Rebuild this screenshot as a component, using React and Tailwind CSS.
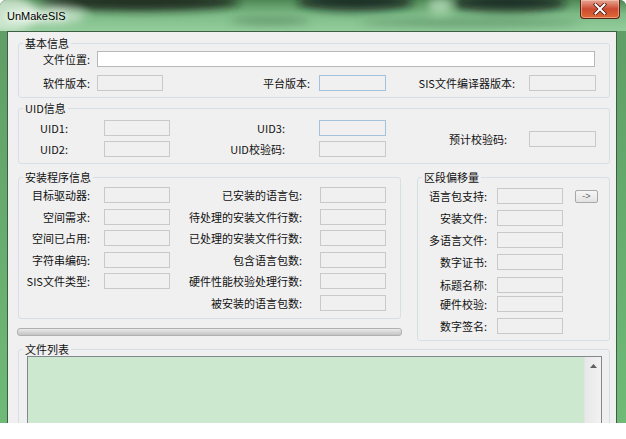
import React from 'react'

// Win7 style dialog: UnMakeSIS

const FIELD = {
  off: 'bg-[#f0f0f0] border border-[#c9c9c9]',
  blue: 'bg-[#f0f0f0] border border-[#a3c0dc]',
  white: 'bg-white border border-[#b8b8b8]',
}

function Lbl({ w, children }) {
  return (
    <span className={`shrink-0 whitespace-nowrap text-right leading-[14px] ${w}`}>{children}</span>
  )
}

function Field({ className = '', kind = 'off' }) {
  return <div className={`h-[16px] shrink-0 ${FIELD[kind]} ${className}`} />
}

function Group({ title, className = '', children }) {
  return (
    <fieldset className={`rounded-[3px] border border-[#d5dfe5] ${className}`}>
      <legend className="ml-[4px] px-[2px] leading-[14px]">{title}</legend>
      {children}
    </fieldset>
  )
}

function Row({ className = '', children }) {
  return <div className={`flex h-[16px] items-center ${className}`}>{children}</div>
}

function TitleBar() {
  return (
    <div className="relative flex h-[31px] shrink-0">
      <svg className="absolute inset-0" width="626" height="31" viewBox="0 0 626 31">
        <defs>
          <linearGradient id="tb" x1="0" y1="0" x2="0" y2="1">
            <stop offset="0" stopColor="#4f8856" />
            <stop offset="0.45" stopColor="#7dbb87" />
            <stop offset="1" stopColor="#94cd9c" />
          </linearGradient>
          <filter id="bl" x="-30%" y="-300%" width="160%" height="700%">
            <feGaussianBlur stdDeviation="4" />
          </filter>
        </defs>
        <rect width="626" height="31" fill="url(#tb)" />
        <g filter="url(#bl)">
          <ellipse cx="8" cy="14" rx="30" ry="18" fill="#dcefdc" opacity="0.8" />
          <ellipse cx="140" cy="2" rx="100" ry="9" fill="#141d15" opacity="0.85" />
          <ellipse cx="355" cy="2" rx="58" ry="9" fill="#141d15" opacity="0.8" />
          <ellipse cx="508" cy="3" rx="58" ry="9" fill="#141d15" opacity="0.8" />
          <ellipse cx="270" cy="21" rx="40" ry="4" fill="#3e6c45" opacity="0.45" />
          <ellipse cx="470" cy="23" rx="110" ry="4" fill="#42704a" opacity="0.45" />
          <ellipse cx="440" cy="6" rx="12" ry="8" fill="#bfe3c2" opacity="0.7" />
          <ellipse cx="45" cy="16" rx="40" ry="8" fill="#e8f5e8" opacity="0.6" />
        </g>
      </svg>
      <span className="relative self-center pl-[7px] pt-[1px] font-['Liberation_Sans',sans-serif] text-[11px] text-black [text-shadow:0_0_6px_#ffffff,0_0_10px_#ffffff]">
        UnMakeSIS
      </span>
      <button className="relative ml-auto mr-[6px] flex h-[19px] w-[40px] items-center justify-center self-start rounded-b-[4px] border border-t-0 border-[#5a2218] bg-gradient-to-b from-[#e6a595] via-[#cc4a30] to-[#de6a34] shadow-[inset_0_0_0_1px_rgba(255,220,200,0.45)]">
        <svg width="14" height="12" viewBox="0 0 14 12">
          <path d="M2.5 1.5 L11.5 10.5 M11.5 1.5 L2.5 10.5" stroke="#4a1810" strokeWidth="3.6" strokeLinecap="square" />
          <path d="M2.5 1.5 L11.5 10.5 M11.5 1.5 L2.5 10.5" stroke="#ffffff" strokeWidth="2" strokeLinecap="square" />
        </svg>
      </button>
    </div>
  )
}

export default function App() {
  return (
    <div className="h-[439px] w-[626px] bg-white font-['Noto_Sans_CJK_SC',sans-serif] text-[11px] text-[#111]">
      <div className="flex h-[423px] w-[626px] flex-col overflow-hidden rounded-t-[6px] bg-gradient-to-b from-[#5e9c65] to-[#6fba77]">
        <TitleBar />
        <div className="ml-[7px] mr-[9px] flex-1 border-x border-t border-[#3d5e43] bg-[#f0f0f0] pl-[10px] pr-[6px] pt-[4px]">
          {/* 基本信息 */}
          <Group title="基本信息">
            <div className="pt-[1px] pb-[6px]">
              <Row>
                <Lbl w="w-[71px]">文件位置:</Lbl>
                <Field kind="white" className="ml-[7px] w-[498px]" />
              </Row>
              <Row className="mt-[8px]">
                <Lbl w="w-[71px]">软件版本:</Lbl>
                <Field className="ml-[7px] w-[66px]" />
                <Lbl w="w-[147px]">平台版本:</Lbl>
                <Field kind="blue" className="ml-[9px] w-[67px]" />
                <Lbl w="w-[129px]">SIS文件编译器版本:</Lbl>
                <Field className="ml-[14px] w-[67px]" />
              </Row>
            </div>
          </Group>

          {/* UID信息 */}
          <Group title="UID信息" className="mt-[3px]">
            <div className="flex pt-[5px] pb-[6px]">
              <div className="flex flex-col gap-[5px]">
                <Row>
                  <Lbl w="w-[49px]">UID1:</Lbl>
                  <Field className="ml-[36px] w-[66px]" />
                  <Lbl w="w-[115px]">UID3:</Lbl>
                  <Field kind="blue" className="ml-[34px] w-[67px]" />
                </Row>
                <Row>
                  <Lbl w="w-[49px]">UID2:</Lbl>
                  <Field className="ml-[36px] w-[66px]" />
                  <Lbl w="w-[115px]">UID校验码:</Lbl>
                  <Field className="ml-[34px] w-[67px]" />
                </Row>
              </div>
              <div className="flex items-center">
                <Lbl w="w-[121px]">预计校验码:</Lbl>
                <Field className="ml-[22px] w-[67px]" />
              </div>
            </div>
          </Group>

          <div className="mt-[6px] flex items-start">
            {/* 安装程序信息 */}
            <div className="w-[383px] shrink-0">
              <Group title="安装程序信息">
                <div className="flex flex-col gap-[5.5px] pt-[3px] pb-[7px]">
                  {[
                    ['目标驱动器:', '已安装的语言包:'],
                    ['空间需求:', '待处理的安装文件行数:'],
                    ['空间已占用:', '已处理的安装文件行数:'],
                    ['字符串编码:', '包含语言包数:'],
                    ['SIS文件类型:', '硬件性能校验处理行数:'],
                    [null, '被安装的语言包数:'],
                  ].map(([a, b], i) => (
                    <Row key={i}>
                      {a ? (
                        <>
                          <Lbl w="w-[71px]">{a}</Lbl>
                          <Field className="ml-[14px] w-[66px]" />
                        </>
                      ) : (
                        <div className="w-[151px] shrink-0" />
                      )}
                      <Lbl w="w-[132px]">{b}</Lbl>
                      <Field className="ml-[18px] w-[66px]" />
                    </Row>
                  ))}
                </div>
              </Group>
              <div className="-ml-[1px] mt-[9px] h-[8px] w-[385px] rounded-[3px] border border-[#b0b0b0] bg-gradient-to-b from-[#ececec] via-[#d6d6d6] to-[#c4c4c4]" />
            </div>

            {/* 区段偏移量 */}
            <Group title="区段偏移量" className="ml-[16px] w-[193px] shrink-0">
              <div className="pt-[4px] pb-[6px]">
                <Row>
                  <Lbl w="w-[69px]">语言包支持:</Lbl>
                  <Field className="ml-[10px] w-[66px]" />
                  <button className="ml-[12px] flex h-[13px] w-[23px] items-center justify-center rounded-[2px] border border-[#a8a8a8] bg-gradient-to-b from-[#f6f6f6] to-[#e2e2e2] font-['Liberation_Sans',sans-serif] text-[9px] leading-none text-[#666]">
                    -&gt;
                  </button>
                </Row>
                <Row className="mt-[6px]">
                  <Lbl w="w-[69px]">安装文件:</Lbl>
                  <Field className="ml-[10px] w-[66px]" />
                </Row>
                <Row className="mt-[6px]">
                  <Lbl w="w-[69px]">多语言文件:</Lbl>
                  <Field className="ml-[10px] w-[66px]" />
                </Row>
                <Row className="mt-[6px]">
                  <Lbl w="w-[69px]">数字证书:</Lbl>
                  <Field className="ml-[10px] w-[66px]" />
                </Row>
                <Row className="mt-[7px]">
                  <Lbl w="w-[69px]">标题名称:</Lbl>
                  <Field className="ml-[10px] w-[66px]" />
                </Row>
                <Row className="mt-[3px]">
                  <Lbl w="w-[69px]">硬件校验:</Lbl>
                  <Field className="ml-[10px] w-[66px]" />
                </Row>
                <Row className="mt-[6px]">
                  <Lbl w="w-[69px]">数字签名:</Lbl>
                  <Field className="ml-[10px] w-[66px]" />
                </Row>
              </div>
            </Group>
          </div>

          {/* 文件列表 */}
          <Group title="文件列表" className="mt-[1px]">
            <div className="ml-[8px] mr-[7px] flex h-[120px] border border-[#828790] bg-[#cce8cf]">
              <div className="flex-1" />
              <div className="flex w-[17px] flex-col items-center border-l border-[#e3e3e3] bg-gradient-to-r from-[#e8e8e8] to-[#f2f2f2]">
                <div className="flex h-[17px] items-center justify-center">
                  <svg width="7" height="4" viewBox="0 0 7 4">
                    <path d="M0 4 L3.5 0 L7 4 Z" fill="#5f5f5f" />
                  </svg>
                </div>
                <div className="mt-[43px] flex h-[17px] items-center justify-center">
                  <svg width="7" height="4" viewBox="0 0 7 4">
                    <path d="M0 0 L3.5 4 L7 0 Z" fill="#5f5f5f" />
                  </svg>
                </div>
              </div>
            </div>
          </Group>
        </div>
      </div>
    </div>
  )
}
